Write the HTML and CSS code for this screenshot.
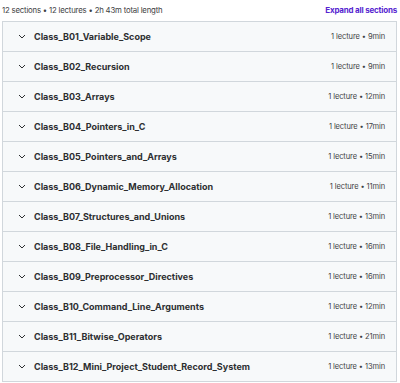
FILE: index.html
```html
<!DOCTYPE html>
<html>
<head>
<meta charset="utf-8">
<link rel="stylesheet" href="styles.css">
</head>
<body>
<div class="curriculum">
  <div class="summary">
    <span class="stats">12 sections • 12 lectures • 2h 43m total length</span>
    <span class="expand">Expand all sections</span>
  </div>
  <div class="sections">
    <div class="row"><span class="chev"><svg width="8" height="5" viewBox="0 0 8 5"><path d="M1 1l3 3 3-3" fill="none" stroke="#2d2f31" stroke-width="1"/></svg></span><span class="title">Class_B01_Variable_Scope</span><span class="meta">1 lecture • 9min</span></div>
    <div class="row"><span class="chev"><svg width="8" height="5" viewBox="0 0 8 5"><path d="M1 1l3 3 3-3" fill="none" stroke="#2d2f31" stroke-width="1"/></svg></span><span class="title">Class_B02_Recursion</span><span class="meta">1 lecture • 9min</span></div>
    <div class="row"><span class="chev"><svg width="8" height="5" viewBox="0 0 8 5"><path d="M1 1l3 3 3-3" fill="none" stroke="#2d2f31" stroke-width="1"/></svg></span><span class="title">Class_B03_Arrays</span><span class="meta">1 lecture • 12min</span></div>
    <div class="row"><span class="chev"><svg width="8" height="5" viewBox="0 0 8 5"><path d="M1 1l3 3 3-3" fill="none" stroke="#2d2f31" stroke-width="1"/></svg></span><span class="title">Class_B04_Pointers_in_C</span><span class="meta">1 lecture • 17min</span></div>
    <div class="row"><span class="chev"><svg width="8" height="5" viewBox="0 0 8 5"><path d="M1 1l3 3 3-3" fill="none" stroke="#2d2f31" stroke-width="1"/></svg></span><span class="title">Class_B05_Pointers_and_Arrays</span><span class="meta">1 lecture • 15min</span></div>
    <div class="row"><span class="chev"><svg width="8" height="5" viewBox="0 0 8 5"><path d="M1 1l3 3 3-3" fill="none" stroke="#2d2f31" stroke-width="1"/></svg></span><span class="title">Class_B06_Dynamic_Memory_Allocation</span><span class="meta">1 lecture • 11min</span></div>
    <div class="row"><span class="chev"><svg width="8" height="5" viewBox="0 0 8 5"><path d="M1 1l3 3 3-3" fill="none" stroke="#2d2f31" stroke-width="1"/></svg></span><span class="title">Class_B07_Structures_and_Unions</span><span class="meta">1 lecture • 13min</span></div>
    <div class="row"><span class="chev"><svg width="8" height="5" viewBox="0 0 8 5"><path d="M1 1l3 3 3-3" fill="none" stroke="#2d2f31" stroke-width="1"/></svg></span><span class="title">Class_B08_File_Handling_in_C</span><span class="meta">1 lecture • 16min</span></div>
    <div class="row"><span class="chev"><svg width="8" height="5" viewBox="0 0 8 5"><path d="M1 1l3 3 3-3" fill="none" stroke="#2d2f31" stroke-width="1"/></svg></span><span class="title">Class_B09_Preprocessor_Directives</span><span class="meta">1 lecture • 16min</span></div>
    <div class="row"><span class="chev"><svg width="8" height="5" viewBox="0 0 8 5"><path d="M1 1l3 3 3-3" fill="none" stroke="#2d2f31" stroke-width="1"/></svg></span><span class="title">Class_B10_Command_Line_Arguments</span><span class="meta">1 lecture • 12min</span></div>
    <div class="row"><span class="chev"><svg width="8" height="5" viewBox="0 0 8 5"><path d="M1 1l3 3 3-3" fill="none" stroke="#2d2f31" stroke-width="1"/></svg></span><span class="title">Class_B11_Bitwise_Operators</span><span class="meta">1 lecture • 21min</span></div>
    <div class="row"><span class="chev"><svg width="8" height="5" viewBox="0 0 8 5"><path d="M1 1l3 3 3-3" fill="none" stroke="#2d2f31" stroke-width="1"/></svg></span><span class="title">Class_B12_Mini_Project_Student_Record_System</span><span class="meta">1 lecture • 13min</span></div>
  </div>
</div>
</body>
</html>
```

FILE: styles.css
```css
html, body {
  margin: 0;
  padding: 0;
  background: #ffffff;
}
body {
  font-family: Inter, "Liberation Sans", sans-serif;
  color: #2d2f31;
}
.curriculum {
  padding: 0 3px 0 2px;
}
.summary {
  display: flex;
  justify-content: space-between;
  align-items: center;
  height: 19px;
  padding-bottom: 2px;
}
.stats {
  font-size: 7.8px;
  letter-spacing: -0.2px;
  color: #3e4143;
}
.expand {
  font-size: 8px;
  font-weight: 700;
  letter-spacing: -0.2px;
  color: #5624d0;
}
.sections {
  border: 1px solid #d1d7dc;
  border-bottom: none;
}
.row {
  display: flex;
  align-items: center;
  height: 29px;
  background: #f7f9fa;
  border-bottom: 1px solid #d1d7dc;
  padding: 0 11px 0 15px;
}
.chev {
  display: flex;
  width: 8px;
  margin-right: 8px;
}
.title {
  flex: 1;
  font-size: 9px;
  font-weight: 700;
  color: #2d2f31;
}
.meta {
  font-size: 7.5px;
  letter-spacing: -0.1px;
  color: #3e4143;
}
```
